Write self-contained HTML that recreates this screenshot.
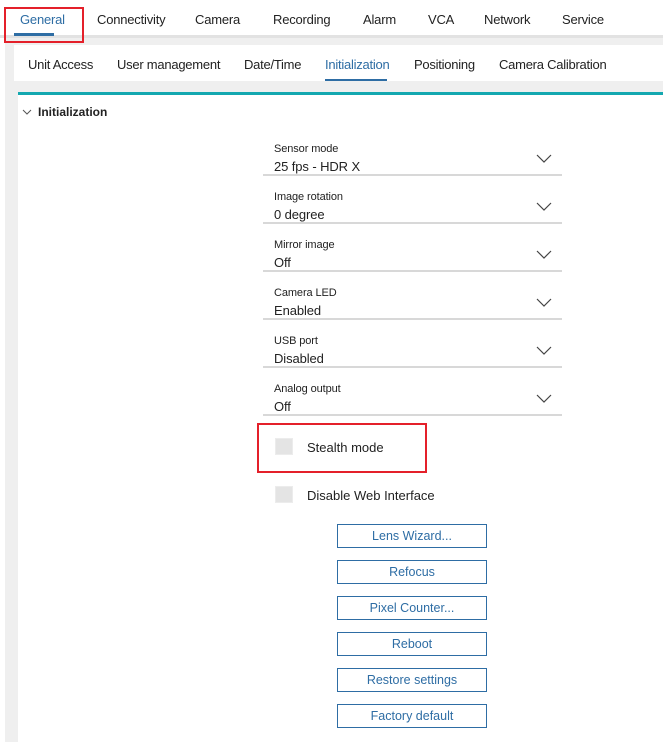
<!DOCTYPE html>
<html><head><style>
*{margin:0;padding:0;box-sizing:border-box}
body{width:663px;height:747px;background:#fff;font-family:"Liberation Sans",sans-serif;position:relative;overflow:hidden;color:#222}
.a{position:absolute}
.top span{position:absolute;top:12px;font-size:13px;color:#222;letter-spacing:-0.2px}
.sub span{position:absolute;top:57px;font-size:13px;color:#222;letter-spacing:-0.25px}
.lbl{position:absolute;left:274px;font-size:11px;color:#222;letter-spacing:-0.1px}
.val{position:absolute;left:274px;font-size:13px;color:#222;letter-spacing:-0.1px}
.line{position:absolute;left:263px;width:299px;height:2px;background:#d8d8d8}
.btn{position:absolute;left:337px;width:150px;height:24px;border:1.5px solid #2e6da4;color:#2e6da4;font-size:12.5px;text-align:center;line-height:23px;background:#fff}
.cb{position:absolute;left:275px;width:18px;height:17px;background:#e4e4e4;border:1px solid #ececec}
</style></head><body>
<div class="a" style="left:5px;top:37px;width:658px;height:705px;background:#efefef"></div>
<div class="a" style="left:0;top:35px;width:663px;height:3px;background:#e2e2e2"></div>
<div class="top">
<span style="left:20px;color:#2e6da4">General</span>
<span style="left:97px">Connectivity</span>
<span style="left:195px">Camera</span>
<span style="left:273px">Recording</span>
<span style="left:363px">Alarm</span>
<span style="left:428px">VCA</span>
<span style="left:484px">Network</span>
<span style="left:562px">Service</span>
</div>
<div class="a" style="left:14px;top:33px;width:40px;height:3px;background:#2e6da4"></div>
<div class="a" style="left:4px;top:7px;width:80px;height:36px;border:2px solid #e4202a"></div>
<div class="a" style="left:14px;top:45px;width:649px;height:36px;background:#fff"></div>
<div class="sub">
<span style="left:28px">Unit Access</span>
<span style="left:117px">User management</span>
<span style="left:244px">Date/Time</span>
<span style="left:325px;color:#2e6da4">Initialization</span>
<span style="left:414px">Positioning</span>
<span style="left:499px">Camera Calibration</span>
</div>
<div class="a" style="left:325px;top:79px;width:62px;height:2px;background:#2e6da4"></div>
<div class="a" style="left:18px;top:92px;width:645px;height:650px;background:#fff"></div>
<div class="a" style="left:18px;top:92px;width:645px;height:3px;background:#14a8b0"></div>
<svg class="a" style="left:22px;top:108px" width="10" height="8"><path d="M1 2 L5 6 L9 2" fill="none" stroke="#555" stroke-width="1"/></svg>
<div class="a" style="left:38px;top:105px;font-size:12px;font-weight:bold">Initialization</div>

<div class="lbl" style="top:143px">Sensor mode</div><div class="val" style="top:159px">25 fps - HDR X</div><div class="line" style="top:174px"></div>
<div class="lbl" style="top:191px">Image rotation</div><div class="val" style="top:207px">0 degree</div><div class="line" style="top:222px"></div>
<div class="lbl" style="top:239px">Mirror image</div><div class="val" style="top:255px">Off</div><div class="line" style="top:270px"></div>
<div class="lbl" style="top:287px">Camera LED</div><div class="val" style="top:303px">Enabled</div><div class="line" style="top:318px"></div>
<div class="lbl" style="top:335px">USB port</div><div class="val" style="top:351px">Disabled</div><div class="line" style="top:366px"></div>
<div class="lbl" style="top:383px">Analog output</div><div class="val" style="top:399px">Off</div><div class="line" style="top:414px"></div>
<svg class="a" style="left:536px;top:154px" width="16" height="10"><path d="M1 1 L8 8 L15 1" fill="none" stroke="#444" stroke-width="1.2"/></svg>
<svg class="a" style="left:536px;top:202px" width="16" height="10"><path d="M1 1 L8 8 L15 1" fill="none" stroke="#444" stroke-width="1.2"/></svg>
<svg class="a" style="left:536px;top:250px" width="16" height="10"><path d="M1 1 L8 8 L15 1" fill="none" stroke="#444" stroke-width="1.2"/></svg>
<svg class="a" style="left:536px;top:298px" width="16" height="10"><path d="M1 1 L8 8 L15 1" fill="none" stroke="#444" stroke-width="1.2"/></svg>
<svg class="a" style="left:536px;top:346px" width="16" height="10"><path d="M1 1 L8 8 L15 1" fill="none" stroke="#444" stroke-width="1.2"/></svg>
<svg class="a" style="left:536px;top:394px" width="16" height="10"><path d="M1 1 L8 8 L15 1" fill="none" stroke="#444" stroke-width="1.2"/></svg>

<div class="cb" style="top:438px"></div>
<div class="a" style="left:307px;top:440px;font-size:13px">Stealth mode</div>
<div class="a" style="left:257px;top:423px;width:170px;height:50px;border:2px solid #e4202a"></div>
<div class="cb" style="top:486px"></div>
<div class="a" style="left:307px;top:488px;font-size:13px">Disable Web Interface</div>

<div class="btn" style="top:524px">Lens Wizard...</div>
<div class="btn" style="top:560px">Refocus</div>
<div class="btn" style="top:596px">Pixel Counter...</div>
<div class="btn" style="top:632px">Reboot</div>
<div class="btn" style="top:668px">Restore settings</div>
<div class="btn" style="top:704px">Factory default</div>
</body></html>
